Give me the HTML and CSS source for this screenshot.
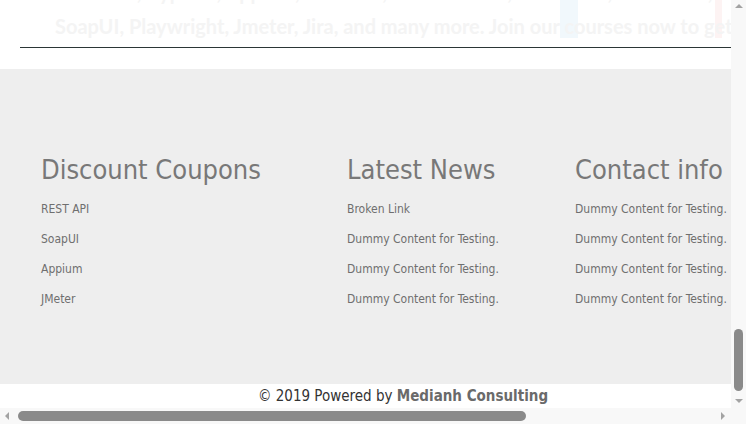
FILE: index.html
```html
<!DOCTYPE html>
<html>
<head>
<meta charset="utf-8">
<link rel="stylesheet" href="styles.css">
</head>
<body>
<div class="frame">
  <div class="viewport">
    <div class="page">
      <section class="hero">
        <div class="hero-art">
          <span class="art-blue"></span>
          <span class="art-pink"></span>
        </div>
        <p class="hero-text">Selenium, Cypress, Appium, Postman, Rest Assured, Protractor, Cucumber,<br>SoapUI, Playwright, Jmeter, Jira, and many more. Join our courses now to get started</p>
        <hr class="rule">
      </section>
      <footer class="footer">
        <div class="col col-coupons">
          <h2 class="col-title">Discount Coupons</h2>
          <ul class="links">
            <li>REST API</li>
            <li>SoapUI</li>
            <li>Appium</li>
            <li>JMeter</li>
          </ul>
        </div>
        <div class="col col-news">
          <h2 class="col-title">Latest News</h2>
          <ul class="links">
            <li>Broken Link</li>
            <li>Dummy Content for Testing.</li>
            <li>Dummy Content for Testing.</li>
            <li>Dummy Content for Testing.</li>
          </ul>
        </div>
        <div class="col col-contact">
          <h2 class="col-title">Contact info</h2>
          <ul class="links">
            <li>Dummy Content for Testing.</li>
            <li>Dummy Content for Testing.</li>
            <li>Dummy Content for Testing.</li>
            <li>Dummy Content for Testing.</li>
          </ul>
        </div>
      </footer>
      <div class="copyright">© 2019 Powered by <b class="brand">Medianh Consulting</b></div>
    </div>
  </div>
  <div class="vbar">
    <span class="arrow arrow-up"></span>
    <div class="vtrack"><span class="vthumb"></span></div>
    <span class="arrow arrow-down"></span>
  </div>
  <div class="hbar">
    <span class="arrow arrow-left"></span>
    <div class="htrack"><span class="hthumb"></span></div>
    <span class="arrow arrow-right"></span>
  </div>
  <div class="corner"></div>
</div>
</body>
</html>
```
FILE: styles.css
```css
html, body {
  margin: 0;
  padding: 0;
  height: 100%;
  overflow: hidden;
  background: #ffffff;
}

.frame {
  display: grid;
  grid-template-columns: 731px 15px;
  grid-template-rows: 408px 16px;
  width: 746px;
  height: 424px;
}

.viewport {
  overflow: hidden;
  background: #ffffff;
}

.page {
  width: 1000px;
  display: flex;
  flex-direction: column;
}

/* hero remnant */
.hero {
  position: relative;
  height: 69px;
  width: 731px;
  overflow: hidden;
}

.hero-art {
  position: absolute;
  inset: 0;
}

.art-blue {
  position: absolute;
  left: 560px;
  top: 0;
  width: 18px;
  height: 38px;
  background: #f1f8fc;
}

.art-pink {
  position: absolute;
  left: 715px;
  top: 0;
  width: 7px;
  height: 38px;
  background: #fdf3f3;
}

.hero-text {
  position: relative;
  margin: -25px 0 0 55px;
  font-family: Lato, "Liberation Sans", sans-serif;
  font-weight: 700;
  font-size: 20px;
  line-height: 34px;
  color: #f4f4f4;
  white-space: nowrap;
}

.rule {
  margin: 4px 0 0 20px;
  border: 0;
  border-top: 1px solid #2b3636;
  width: 711px;
  height: 0;
}

/* footer */
.footer {
  background: #eeeeee;
  height: 315px;
  box-sizing: border-box;
  padding: 86px 0 0 41px;
  display: flex;
  font-family: "DejaVu Sans Condensed", "DejaVu Sans", sans-serif;
  color: #777777;
}

.col-coupons { width: 306px; }
.col-news { width: 228px; }
.col-contact { width: 260px; }

.col-title {
  margin: 0;
  font-weight: 400;
  font-size: 27px;
  line-height: 30px;
  color: #787878;
  white-space: nowrap;
}

.links {
  list-style: none;
  margin: 9px 0 0;
  padding: 0;
  display: flex;
  flex-direction: column;
}

.links li {
  font-size: 12px;
  line-height: 30px;
  color: #6f6f6f;
  white-space: nowrap;
}

.copyright {
  width: 731px;
  height: 24px;
  text-align: center;
  font-family: "DejaVu Sans Condensed", "DejaVu Sans", sans-serif;
  font-size: 15px;
  line-height: 24px;
  color: #333333;
  padding-left: 75px;
  box-sizing: border-box;
}

.brand {
  color: #6a6a6a;
  font-weight: 700;
}

/* fake scrollbars */
.vbar {
  background: #f8f8f8;
  display: flex;
  flex-direction: column;
  align-items: center;
}

.vtrack {
  flex: 1;
  width: 100%;
  display: flex;
  flex-direction: column;
  justify-content: flex-end;
  align-items: center;
  padding-bottom: 2px;
  box-sizing: border-box;
}

.vthumb {
  width: 9px;
  height: 62px;
  border-radius: 5px;
  background: #8a8a8a;
}

.hbar {
  background: #f8f8f8;
  display: flex;
  align-items: center;
}

.htrack {
  flex: 1;
  display: flex;
  align-items: center;
  height: 100%;
}

.hthumb {
  width: 508px;
  height: 10px;
  border-radius: 5px;
  background: #8a8a8a;
  margin-left: 6px;
}

.corner {
  background: #f8f8f8;
}

.arrow {
  width: 0;
  height: 0;
  flex: none;
}

.arrow-up {
  margin: 4px 0 6px;
  border-left: 4px solid transparent;
  border-right: 4px solid transparent;
  border-bottom: 4px solid #a3a3a3;
}

.arrow-down {
  margin: 6px 0 5px;
  border-left: 4px solid transparent;
  border-right: 4px solid transparent;
  border-top: 4px solid #a3a3a3;
}

.arrow-left {
  margin: 0 3px 0 5px;
  border-top: 4px solid transparent;
  border-bottom: 4px solid transparent;
  border-right: 4px solid #a3a3a3;
}

.arrow-right {
  margin: 0 6px 0 8px;
  border-top: 4px solid transparent;
  border-bottom: 4px solid transparent;
  border-left: 4px solid #a3a3a3;
}
```
